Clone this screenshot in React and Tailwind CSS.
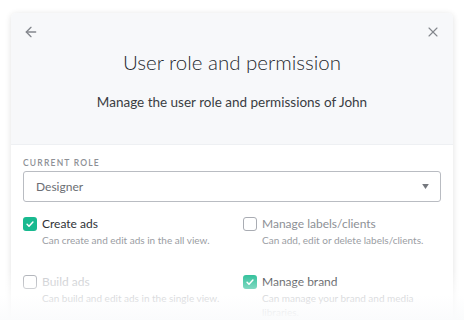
import { ArrowLeft, X } from 'lucide-react';

const perms = [
  { label: 'Create ads', desc: 'Can create and edit ads in the all view.', checked: true },
  { label: 'Manage labels/clients', desc: 'Can add, edit or delete labels/clients.', checked: false },
  { label: 'Build ads', desc: 'Can build and edit ads in the single view.', checked: false, disabled: true },
  { label: 'Manage brand', desc: 'Can manage your brand and media libraries.', checked: true, narrow: true },
];

const Check = ({ checked }) =>
  checked ? (
    <span className="mt-[1px] flex h-[14px] w-[14px] shrink-0 items-center justify-center rounded-[3px] bg-[#19b98f]">
      <svg viewBox="0 0 12 12" className="h-[10px] w-[10px]" fill="none" stroke="white" strokeWidth="1.8" strokeLinecap="round" strokeLinejoin="round">
        <path d="M2.5 6.3l2.3 2.3L9.5 3.6" />
      </svg>
    </span>
  ) : (
    <span className="mt-[1px] h-[14px] w-[14px] shrink-0 rounded-[3px] border-[1.5px] border-[#a9acb3] bg-white" />
  );

const App = () => (
  <div className="relative h-[320px] w-[464px] overflow-hidden bg-white px-[11px] pt-[13px] font-['Lato',sans-serif]">
    <div className="h-[330px] rounded-[5px] bg-white shadow-[0_1px_6px_rgba(0,0,0,0.12)]">
      <div className="flex h-[132px] flex-col rounded-t-[5px] border-b border-[#eef0f3] bg-[#f7f8fa] px-[12px] pt-[11px]">
        <div className="flex items-center justify-between text-[#84878d]">
          <ArrowLeft size={16} strokeWidth={2} />
          <X size={16} strokeWidth={1.7} />
        </div>
        <h1 className="mt-[8px] text-center text-[20.5px] font-light leading-[28px] text-[#26292e]">User role and permission</h1>
        <p className="mt-[17px] text-center text-[13.5px] leading-[18px] text-[#3a3d42]">Manage the user role and permissions of John</p>
      </div>
      <div className="px-[12px] pt-[12px]">
        <div className="text-[8.5px] font-semibold leading-[12px] tracking-[1.2px] text-[#8d9096]">CURRENT ROLE</div>
        <div className="mt-[2px] flex h-[31px] items-center justify-between rounded-[3px] border border-[#b9bcc2] pl-[12px] pr-[11px]">
          <span className="text-[12px] text-[#6b6e74]">Designer</span>
          <svg viewBox="0 0 8 6" className="h-[5px] w-[7px]" fill="#75787e"><path d="M0 0h8L4 6z" /></svg>
        </div>
        <div className="mt-[14px] grid grid-cols-2 gap-x-[22px] gap-y-[27px]">
          {perms.map((p) => (
            <div key={p.label} className="flex gap-[5px]">
              <Check checked={p.checked} />
              <div>
                <div className={`text-[12px] leading-[16px] ${p.disabled ? 'text-[#c4c6ca]' : p.checked ? 'text-[#2f3237]' : 'text-[#8d9096]'}`}>{p.label}</div>
                <div className={`mt-[1px] text-[10px] leading-[14px] text-[#9a9da3] ${p.narrow ? 'max-w-[165px]' : ''}`}>{p.desc}</div>
              </div>
            </div>
          ))}
        </div>
      </div>
    </div>
    <div className="pointer-events-none absolute inset-x-0 bottom-0 h-[50px] bg-gradient-to-b from-white/0 via-white/60 to-[#fafbfc]" />
  </div>
);

export default App;
